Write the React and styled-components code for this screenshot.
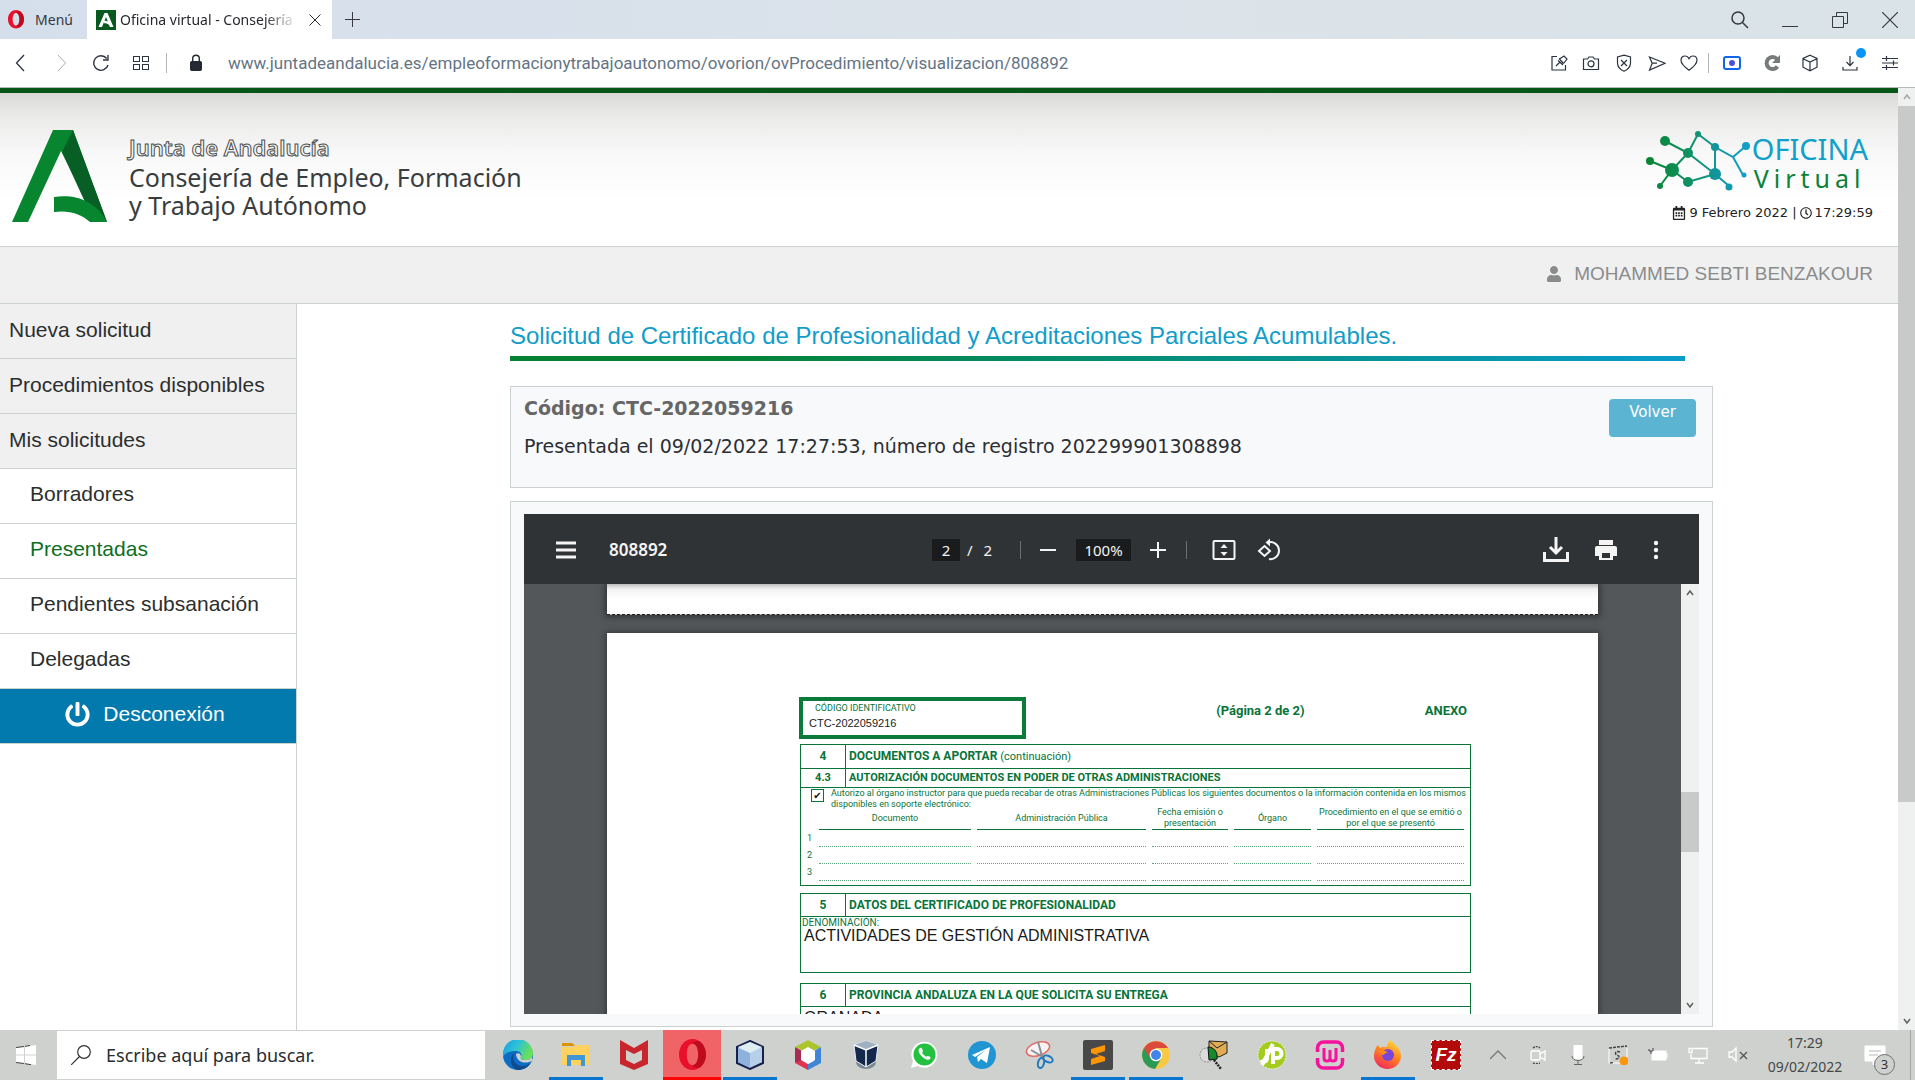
import React from "react";
import styled, { createGlobalStyle, css } from "styled-components";
import { FaPowerOff, FaRegCalendarAlt, FaRegClock, FaUser } from "react-icons/fa";

const ARIAL = '"Liberation Sans", Arial, sans-serif';
const VERDANA = '"DejaVu Sans", Verdana, sans-serif';
const UI = '"Noto Sans", "Segoe UI", sans-serif';
const FORM = 'Roboto, Arial, sans-serif';
const GREEN = "#08743a";
const LINE = "#ccd2cd";

const GlobalStyle = createGlobalStyle`
  *, *::before, *::after { box-sizing: border-box; }
  body { margin: 0; background: #fff; font-family: ${ARIAL}; }
  button, input { font: inherit; color: inherit; }
  button { padding: 0; border: 0; background: none; display: inline-flex; align-items: center; justify-content: center; }
  a { color: inherit; text-decoration: none; }
  h1, h2, p, ul { margin: 0; padding: 0; }
  ul { list-style: none; }
  svg { display: block; flex: none; }
`;

const Desktop = styled.div`
  display: flex;
  flex-direction: column;
  height: 100vh;
  overflow: hidden;
`;

/* ---------- drawing helper ---------- */
const Icon = ({ size = 18, w = 1, fill = "none", box = 18, children }) => (
  <svg width={size} height={size} viewBox={`0 0 ${box} ${box}`} fill={fill} stroke="currentColor" strokeWidth={w} aria-hidden="true">
    {children}
  </svg>
);

/* ---------- browser chrome ---------- */
const TabStrip = styled.div`
  display: flex;
  height: 39px;
  background: linear-gradient(90deg, #d5dfec, #dce3ea 60%, #d9e3e8);
  color: #36393d;
  font: 14px/20px ${UI};
`;
const MenuButton = styled.button`
  width: 87px;
  gap: 11px;
  padding-right: 6px;
`;
const Tab = styled.div`
  display: flex;
  align-items: center;
  width: 245px;
  padding: 0 7px 0 9px;
  gap: 4px;
  background: #fff;
  color: #26282c;
`;
const TabTitle = styled.span`
  flex: 1;
  overflow: hidden;
  white-space: nowrap;
  mask-image: linear-gradient(90deg, #000 80%, transparent 98%);
`;
const TabButton = styled.button`
  width: ${(p) => p.$w || 20}px;
`;
const WindowControls = styled.div`
  display: flex;
  margin-left: auto;
`;
const AddressBar = styled.div`
  display: flex;
  align-items: center;
  height: 49px;
  padding-right: 6px;
  border-bottom: 1px solid #b5bcb6;
  color: #2b3440;
`;
const ToolButton = styled.button`
  position: relative;
  width: ${(p) => p.$w}px;
  height: 32px;
  color: ${(p) => p.$color || "inherit"};
`;
const Divider = styled.span`
  width: 1px;
  height: 20px;
  margin: 0 ${(p) => p.$gap || 0}px;
  background: #b3b8bb;
`;
const UrlInput = styled.input`
  flex: 1;
  min-width: 0;
  margin-left: 8px;
  padding: 0;
  border: 0;
  outline: 0;
  background: transparent;
  font: 17px/24px Roboto, sans-serif;
  color: #647484;
`;
const Dot = styled.span`
  position: absolute;
  top: 1px;
  right: 4px;
  width: 10px;
  height: 10px;
  border-radius: 50%;
  background: #0795f8;
`;

const OperaMark = ({ size = 16 }) => (
  <svg width={size} height={size * 1.15} viewBox="0 0 20 23" aria-hidden="true">
    <path fillRule="evenodd" fill="#e8102a" d="M10 0C4.400 0 0 5 0 11.500S4.400 23 10 23s10-5 10-11.500S15.600 0 10 0Zm0 3.600c2.700 0 4.200 3.400 4.200 7.900s-1.500 7.900-4.200 7.900-4.200-3.400-4.200-7.900 1.500-7.900 4.200-7.900Z" />
    <path fill="#a80a18" d="M10 19.400c2.700 0 4.200-3.400 4.200-7.900S12.700 3.600 10 3.600c1.500-2 4-2.600 5.600-1.600C18.300 4 20 7.500 20 11.500S18.300 19 15.600 21c-1.600 1-4.100.4-5.600-1.600Z" opacity=".65" />
  </svg>
);
const Favicon = () => (
  <svg width="20" height="20" viewBox="0 0 20 20" aria-hidden="true">
    <rect width="20" height="20" fill="#07591f" />
    <path d="M2.500 17 8.500 3h3L17.500 17H14l-1-2c-1.500-1.700-3-2-5-1.800v-2.400c1.500-.2 2.700 0 3.800.7L10 7 6 17Z" fill="#fff" />
  </svg>
);

function Browser() {
  return (
    <>
      <TabStrip>
        <MenuButton type="button"><OperaMark />Menú</MenuButton>
        <Tab>
          <Favicon />
          <TabTitle>Oficina virtual - Consejería d</TabTitle>
          <TabButton type="button" aria-label="Cerrar pestaña"><Icon size={12} box={12}><path d="M.5.5l11 11m0-11l-11 11" /></Icon></TabButton>
        </Tab>
        <TabButton $w={40} type="button" aria-label="Nueva pestaña"><Icon size={15} box={15}><path d="M0 7.500h15M7.500 0v15" /></Icon></TabButton>
        <WindowControls>
          <TabButton $w={50} type="button" aria-label="Buscar"><Icon w={1.500}><circle cx="7" cy="7" r="6" /><path d="M11.500 11.500 17 17" /></Icon></TabButton>
          <TabButton $w={50} type="button" aria-label="Minimizar"><Icon size={16} box={16} w={1}><path d="M0 14.500h16" /></Icon></TabButton>
          <TabButton $w={50} type="button" aria-label="Restaurar"><Icon size={16} box={16}><path d="M.5 4.500h11v11H.5zM4.500 4.500v-4h11v11h-4" /></Icon></TabButton>
          <TabButton $w={50} type="button" aria-label="Cerrar"><Icon size={16} box={16} w={1.200}><path d="M0 0l16 16m0-16L0 16" /></Icon></TabButton>
        </WindowControls>
      </TabStrip>
      <AddressBar>
        <ToolButton $w={41} type="button" aria-label="Atrás"><Icon w={1.300}><path d="M12 1 4.500 9l7.500 8" /></Icon></ToolButton>
        <ToolButton $w={39} $color="#a9b0ae" type="button" aria-label="Adelante"><Icon><path d="M6 1l7.500 8L6 17" /></Icon></ToolButton>
        <ToolButton $w={41} type="button" aria-label="Recargar"><Icon w={1.400}><path d="M16 11a7.300 7.300 0 1 1-1.300-6.500M16 1v5h-5" /></Icon></ToolButton>
        <ToolButton $w={40} type="button" aria-label="Inicio rápido"><Icon><rect x="1.500" y="2.500" width="6" height="5" /><rect x="10.500" y="2.500" width="6" height="5" /><rect x="1.500" y="10.500" width="6" height="5" /><rect x="10.500" y="10.500" width="6" height="5" /></Icon></ToolButton>
        <Divider $gap={5} />
        <ToolButton $w={48} $color="#242a34" type="button" aria-label="Información del sitio"><Icon w={1.400}><rect x="3.700" y="7.700" width="10.600" height="8.600" rx="1" fill="currentColor" /><path d="M5.700 8V4.500a3.300 3.300 0 0 1 6.600 0V8" /></Icon></ToolButton>
        <UrlInput aria-label="Dirección" defaultValue="www.juntadeandalucia.es/empleoformacionytrabajoautonomo/ovorion/ovProcedimiento/visualizacion/808892" />
        <ToolButton $w={33} type="button" aria-label="Fijar"><Icon w={1.200}><path d="M7 2.500H2v13.500h13.500V11M6 12l4-4M9 4.500l4.500 5M9.500 5l4.500-3 3 3-3.500 4.500M8 6.500 13 11" /></Icon></ToolButton>
        <ToolButton $w={32} type="button" aria-label="Captura"><Icon w={1.200}><path d="M1.500 5h4l1.500-2h4l1.500 2h4v10.500h-15z" /><circle cx="9" cy="9.800" r="3" /></Icon></ToolButton>
        <ToolButton $w={33} type="button" aria-label="Bloqueador"><Icon w={1.200}><path d="M9 1.200 15.500 3v6c0 4-2.500 6.500-6.500 8.200C5 15.500 2.500 13 2.500 9V3ZM6 6l6 6m0-6-6 6" /></Icon></ToolButton>
        <ToolButton $w={33} type="button" aria-label="Enviar"><Icon w={1.200}><path d="M1.500 3 17 9.200 1.500 16l2.700-6.800ZM4.200 9.200H9" /></Icon></ToolButton>
        <ToolButton $w={32} type="button" aria-label="Favoritos"><Icon w={1.200}><path d="M9 16.200C4 12.500 1 9.800 1 6.200 1 3.500 2.900 2 5 2c1.800 0 3.200 1 4 2.700C9.800 3 11.200 2 13 2c2.100 0 4 1.500 4 4.200 0 3.600-3 6.300-8 10Z" /></Icon></ToolButton>
        <Divider $gap={3} />
        <ToolButton $w={40} $color="#1264e8" type="button" aria-label="Vídeo"><Icon w={2}><rect x="1" y="3" width="16" height="12" rx="2" /><circle cx="9" cy="9" r="2" fill="currentColor" stroke="#5850d0" /></Icon></ToolButton>
        <ToolButton $w={39} $color="#777b7b" type="button" aria-label="Extensión"><Icon w={4}><path d="M14.500 12.500a6 6 0 1 1-.5-7.500" /><path d="M17 1v8H9Z" fill="currentColor" stroke="none" /></Icon></ToolButton>
        <ToolButton $w={38} type="button" aria-label="Extensiones"><Icon w={1.200}><path d="M9 1.200 16 4.500v8.700L9 16.800 2 13.200V4.500ZM2 4.700 9 8l7-3.300M9 8v8.600" /></Icon></ToolButton>
        <ToolButton $w={41} type="button" aria-label="Descargas"><Icon w={1.200}><path d="M9 2v9.500M5.500 8 9 11.700 12.500 8M2 13v3h14v-3" /></Icon><Dot /></ToolButton>
        <ToolButton $w={39} type="button" aria-label="Configuración"><Icon w={1.200}><path d="M1 4.500h16M1 9h16M1 13.500h16M5.500 2v5M12.500 6.500v5M5.500 11v5" /></Icon></ToolButton>
      </AddressBar>
    </>
  );
}

/* ---------- scrollbars ---------- */
const Track = styled.div`
  display: flex;
  flex-direction: column;
  flex: none;
  width: ${(p) => p.$w}px;
  background: #eff1f0;
  color: #5c6060;
`;
const Arrow = styled.button`
  height: 18px;
  opacity: ${(p) => (p.$dim ? 0.5 : 1)};
`;
const Gutter = styled.span`
  flex: ${(p) => p.$grow};
`;
const Thumb = styled(Gutter)`
  background: #c8caca;
`;
function Scrollbar({ w, before, thumb, after }) {
  return (
    <Track $w={w}>
      <Arrow type="button" aria-label="Subir" $dim={before === 0}><Icon size={8} box={8} w={1.500}><path d="M1 6l3-4 3 4" /></Icon></Arrow>
      {before > 0 && <Gutter $grow={before} />}
      <Thumb $grow={thumb} />
      <Gutter $grow={after} />
      <Arrow type="button" aria-label="Bajar"><Icon size={8} box={8} w={1.500}><path d="M1 2l3 4 3-4" /></Icon></Arrow>
    </Track>
  );
}

/* ---------- site ---------- */
const Viewport = styled.div`
  display: flex;
  flex: 1;
  min-height: 0;
`;
const Site = styled.div`
  display: flex;
  flex-direction: column;
  flex: 1;
  min-width: 0;
`;
const Masthead = styled.header`
  display: flex;
  justify-content: space-between;
  height: 159px;
  padding: 37px 25px 0 12px;
  border-top: 5px solid #06561a;
  border-bottom: 1px solid ${LINE};
  background: linear-gradient(#d9d9d8 0, #ebebea 24px, #f8f8f8 60px, #fff 108px);
`;
const Brand = styled.a`
  display: flex;
  gap: 21px;
  font-family: ${UI};
  color: #3a3d3d;
`;
const BrandText = styled.span`
  display: flex;
  flex-direction: column;
  padding-top: 3px;
  font-size: 25px;
  line-height: 28px;
`;
const BrandTop = styled.span`
  padding-bottom: 2px;
  font-size: 22px;
  font-weight: 600;
  color: #f6f6f6;
  -webkit-text-stroke: 1px #4d5050;
`;
const Office = styled.div`
  display: flex;
  flex-direction: column;
  align-items: flex-end;
`;
const OfficeLogo = styled.a`
  display: flex;
  gap: 2px;
  margin-right: 5px;
  font-family: ${UI};
`;
const OfficeName = styled.span`
  display: flex;
  flex-direction: column;
  padding-top: 4px;
  font-size: 29px;
  line-height: 30px;
  color: #12a0cb;
`;
const OfficeSub = styled.span`
  margin-left: 2px;
  font-size: 25px;
  line-height: 28px;
  letter-spacing: 5px;
  color: #0a8238;
`;
const DateLine = styled.div`
  display: flex;
  align-items: center;
  gap: 3px;
  margin-top: 11px;
  font: 13px/20px ${VERDANA};
  color: #222;
`;
const UserBar = styled.div`
  display: flex;
  align-items: center;
  justify-content: flex-end;
  gap: 12px;
  height: 57px;
  padding: 0 25px 2px 0;
  border-bottom: 1px solid ${LINE};
  background: #f0f0f1;
  color: #8a8c8c;
  font-size: 19px;
`;
const Columns = styled.div`
  display: flex;
  flex: 1;
  min-height: 0;
`;
const Sidebar = styled.nav`
  width: 297px;
  flex: none;
  border-right: 1px solid ${LINE};
  font-size: 21px;
  color: #2c2e2e;
`;
const NavLink = styled.a`
  display: flex;
  align-items: center;
  height: 55px;
  padding: 0 0 2px 9px;
  border-bottom: 1px solid ${LINE};
  background: #f0f0f0;
  ${(p) => p.$sub && css`
    padding: 0 0 4px 30px;
    background: #fff;
  `}
  ${(p) => p.$active && css`
    color: #0d6e22;
  `}
`;
const LogoutLink = styled(NavLink)`
  justify-content: center;
  gap: 13px;
  padding: 0 6px 4px 0;
  background: #037aae;
  color: #fff;
`;
const Main = styled.main`
  display: flex;
  flex-direction: column;
  flex: 1;
  min-width: 0;
  padding: 17px 185px 3px 213px;
`;
const Title = styled.h1`
  margin-right: 28px;
  padding-bottom: 5px;
  border-bottom: 5px solid;
  border-image: linear-gradient(90deg, #04822f 15%, #089ccb) 1;
  font-size: 24px;
  font-weight: 400;
  line-height: 30px;
  color: #119cca;
`;
const Panel = styled.section`
  border: 1px solid ${LINE};
  background: #f7f9fb;
`;
const Summary = styled(Panel)`
  display: flex;
  justify-content: space-between;
  align-items: flex-start;
  height: 102px;
  margin-top: 25px;
  padding: 9px 16px 0 13px;
  font: 19px/24px ${VERDANA};
  color: #2d2f33;
`;
const Code = styled.h2`
  margin-bottom: 14px;
  font: inherit;
  font-weight: 700;
  color: #666666;
`;
const BackButton = styled.button`
  align-items: flex-start;
  width: 87px;
  height: 38px;
  margin-top: 3px;
  padding-top: 3px;
  border-radius: 4px;
  background: #5bb4d2;
  font-size: 15px;
  line-height: 20px;
  color: #fff;
`;
const ViewerPanel = styled(Panel)`
  display: flex;
  flex: 1;
  min-height: 0;
  margin-top: 13px;
  padding: 12px 13px;
`;

/* ---------- pdf viewer ---------- */
const Viewer = styled.div`
  display: flex;
  flex-direction: column;
  flex: 1;
  min-width: 0;
  background: #54575a;
`;
const Toolbar = styled.div`
  display: grid;
  grid-template-columns: 1fr auto 1fr;
  align-items: center;
  flex: none;
  height: 70px;
  padding: 2px 18px 0 30px;
  background: #303336;
  color: #f4f4f4;
  font: 15px/20px ${UI};
`;
const ToolGroup = styled.div`
  display: flex;
  align-items: center;
  gap: ${(p) => p.$gap || 0}px;
  justify-content: ${(p) => (p.$end ? "flex-end" : "flex-start")};
`;
const PageTools = styled(ToolGroup)`
  padding-right: 22px;
`;
const FileName = styled.span`
  font-size: 17px;
  font-weight: 600;
`;
const ToolField = styled.input`
  width: ${(p) => p.$w}px;
  height: 22px;
  padding: 0;
  border: 0;
  background: #191b1c;
  text-align: center;
`;
const PdfButton = styled.button`
  width: ${(p) => p.$w}px;
  height: 40px;
`;
const PdfDivider = styled.span`
  width: 1px;
  height: 18px;
  margin: 0 ${(p) => p.$right}px 0 ${(p) => p.$left}px;
  background: #6c7073;
`;
const PdfBody = styled.div`
  display: flex;
  flex: 1;
  min-height: 0;
`;
const Pages = styled.div`
  display: flex;
  flex-direction: column;
  gap: 18px;
  flex: 1;
  padding: 0 83px;
  overflow: hidden;
`;
const PageTail = styled.div`
  flex: none;
  height: 31px;
  border-bottom: 1px dashed #222;
  background: linear-gradient(#bdbdbd, #f2f2f2 5px, #fff 14px);
  box-shadow: 0 0 6px 2px rgba(20, 20, 20, 0.55);
`;
const Page = styled.article`
  flex: none;
  min-height: 600px;
  padding: 64px 127px 0 192px;
  background: #fff;
  box-shadow: 0 0 6px 1px rgba(20, 20, 20, 0.5);
  font: 9px/11px ${FORM};
  color: ${GREEN};
`;
const FormHead = styled.div`
  display: flex;
  align-items: flex-start;
  justify-content: space-between;
  padding-right: 4px;
  font-size: 13px;
  font-weight: 700;
  line-height: 27px;
`;
const IdBox = styled.div`
  width: 227px;
  height: 42px;
  padding: 1px 12px 0;
  border: 4px solid #0a7b3b;
  font-size: 9px;
  font-weight: 400;
  line-height: 12px;
`;
const IdValue = styled.div`
  margin: 2px 0 0 -6px;
  font: 11px/14px ${ARIAL};
  color: #222;
`;
const PageCount = styled.span`
  margin-left: 70px;
`;
const Section = styled.section`
  height: ${(p) => p.$h}px;
  margin: ${(p) => p.$top}px 0 0 1px;
  border: 1px solid ${GREEN};
`;
const SectionHead = styled.div`
  display: grid;
  grid-template-columns: 45px 1fr;
  border-bottom: 1px solid ${GREEN};
  font-size: ${(p) => (p.$minor ? 11 : 12)}px;
  line-height: ${(p) => (p.$minor ? 18 : 22)}px;
  font-weight: 700;
`;
const SectionNo = styled.span`
  border-right: 1px solid ${GREEN};
  text-align: center;
`;
const SectionTitle = styled.span`
  padding-left: 3px;
`;
const Soft = styled.span`
  font-size: 11px;
  font-weight: 400;
`;
const Consent = styled.label`
  display: grid;
  grid-template-columns: 13px 1fr;
  gap: 7px;
  height: 19px;
  padding: 0 4px 0 10px;
  text-align: justify;
`;
const Check = styled.input`
  appearance: none;
  width: 13px;
  height: 13px;
  margin: 1px 0 0;
  border: 1px solid ${GREEN};
  &:checked::after {
    content: "✔";
    display: block;
    font: 10px/11px "DejaVu Sans", sans-serif;
    color: #111;
    text-align: center;
  }
`;
const Grid = styled.table`
  width: 100%;
  table-layout: fixed;
  border-collapse: separate;
  border-spacing: 6px 0;
  th {
    height: 23px;
    padding: 0;
    border-bottom: 1px solid ${GREEN};
    font-weight: 400;
    line-height: 11px;
  }
  td {
    height: 17px;
    padding: 0;
    border-bottom: 1px dotted #5fa67f;
  }
  th:first-child,
  td:first-child {
    border-bottom: 0;
  }
`;
const Answer = styled.p`
  padding: ${(p) => p.$top || 0}px 0 0 3px;
  font: 16px/15px ${ARIAL};
  color: #1a1a1a;
`;
const FieldLabel = styled.p`
  padding-left: 1px;
  font-size: 10px;
`;

function PdfForm() {
  return (
    <Page>
      <FormHead>
        <IdBox>CÓDIGO IDENTIFICATIVO<IdValue>CTC-2022059216</IdValue></IdBox>
        <PageCount>(Página 2 de 2)</PageCount>
        <span>ANEXO</span>
      </FormHead>
      <Section $h={142} $top={5}>
        <SectionHead><SectionNo>4</SectionNo><SectionTitle>DOCUMENTOS A APORTAR <Soft>(continuación)</Soft></SectionTitle></SectionHead>
        <SectionHead $minor><SectionNo>4.3</SectionNo><SectionTitle>AUTORIZACIÓN DOCUMENTOS EN PODER DE OTRAS ADMINISTRACIONES</SectionTitle></SectionHead>
        <Consent>
          <Check type="checkbox" defaultChecked />
          <span>Autorizo al órgano instructor para que pueda recabar de otras Administraciones Públicas los siguientes documentos o la información contenida en los mismos disponibles en soporte electrónico:</span>
        </Consent>
        <Grid>
          <colgroup><col width="6" /><col width="152" /><col width="169" /><col width="76" /><col width="77" /><col /></colgroup>
          <thead>
            <tr><th /><th>Documento</th><th>Administración Pública</th><th>Fecha emisión o presentación</th><th>Órgano</th><th>Procedimiento en el que se emitió o<br />por el que se presentó</th></tr>
          </thead>
          <tbody>
            {[1, 2, 3].map((n) => (
              <tr key={n}><td>{n}</td><td /><td /><td /><td /><td /></tr>
            ))}
          </tbody>
        </Grid>
      </Section>
      <Section $h={80} $top={7}>
        <SectionHead><SectionNo>5</SectionNo><SectionTitle>DATOS DEL CERTIFICADO DE PROFESIONALIDAD</SectionTitle></SectionHead>
        <FieldLabel>DENOMINACIÓN:</FieldLabel>
        <Answer>ACTIVIDADES DE GESTIÓN ADMINISTRATIVA</Answer>
      </Section>
      <Section $h={80} $top={10}>
        <SectionHead><SectionNo>6</SectionNo><SectionTitle>PROVINCIA ANDALUZA EN LA QUE SOLICITA SU ENTREGA</SectionTitle></SectionHead>
        <Answer $top={3}>GRANADA</Answer>
      </Section>
    </Page>
  );
}

function PdfViewer() {
  return (
    <Viewer>
      <Toolbar>
        <ToolGroup $gap={31}>
          <PdfButton $w={24} type="button" aria-label="Menú del documento"><Icon size={20} box={20} w={3}><path d="M0 3h20M0 10h20M0 17h20" /></Icon></PdfButton>
          <FileName>808892</FileName>
        </ToolGroup>
        <PageTools>
          <ToolGroup $gap={7}>
            <ToolField $w={28} aria-label="Página" defaultValue="2" />
            <span>/</span>
            <span>&nbsp;2</span>
          </ToolGroup>
          <PdfDivider $left={28} $right={18} />
          <ToolGroup $gap={19}>
            <PdfButton $w={18} type="button" aria-label="Alejar"><Icon size={16} box={16} w={2}><path d="M0 8h16" /></Icon></PdfButton>
            <ToolField $w={55} aria-label="Zoom" defaultValue="100%" />
            <PdfButton $w={16} type="button" aria-label="Acercar"><Icon size={16} box={16} w={2}><path d="M0 8h16M8 0v16" /></Icon></PdfButton>
          </ToolGroup>
          <PdfDivider $left={20} $right={25} />
          <ToolGroup $gap={21}>
            <PdfButton $w={24} type="button" aria-label="Ajustar a la página"><Icon size={24} box={24} w={2}><rect x="1.500" y="3" width="21" height="18" rx="1" /><path d="M12 6l3.500 4h-7ZM12 18l3.500-4h-7Z" fill="currentColor" stroke="none" /></Icon></PdfButton>
            <PdfButton $w={24} type="button" aria-label="Girar"><Icon size={24} box={24} w={2}><path d="M7.500 8l5.500 5-5.500 5L2 13Z" /><path d="M11 4.500a8.500 8.500 0 1 1 1 16.500" /><path d="M13 .5v8L8.500 4.500Z" fill="currentColor" stroke="none" /></Icon></PdfButton>
          </ToolGroup>
        </PageTools>
        <ToolGroup $end>
          <PdfButton $w={50} type="button" aria-label="Descargar"><Icon size={26} box={26} w={3}><path d="M13 0v15M7 10l6 6 6-6M1.500 15v8.500h23V15" /></Icon></PdfButton>
          <PdfButton $w={50} type="button" aria-label="Imprimir"><Icon size={24} box={24}><path d="M5 2h14v5H5zM3 8h18c1.100 0 2 .9 2 2v8h-4v4H5v-4H1v-8c0-1.100.9-2 2-2Zm5 7v5h8v-5Z" fill="currentColor" fillRule="evenodd" stroke="none" /></Icon></PdfButton>
          <PdfButton $w={50} type="button" aria-label="Más"><Icon size={20} box={20}><g fill="currentColor" stroke="none"><circle cx="10" cy="3" r="2.200" /><circle cx="10" cy="10" r="2.200" /><circle cx="10" cy="17" r="2.200" /></g></Icon></PdfButton>
        </ToolGroup>
      </Toolbar>
      <PdfBody>
        <Pages><PageTail /><PdfForm /></Pages>
        <Scrollbar w={18} before={190} thumb={60} after={144} />
      </PdfBody>
    </Viewer>
  );
}

const JuntaMark = () => (
  <svg width="96" height="92" viewBox="0 0 96 92" aria-hidden="true">
    <path d="M41 0h20L95 92 78 78 49 21 16 92H0Z" fill="#07852f" />
    <path d="M61 0 95 92 73 72 50 22Z" fill="#075f26" />
    <path d="M42 67c22-3 42 4 53 25H78C69 84 57 80 42 82Z" fill="#07852f" />
  </svg>
);
const NetworkMark = () => (
  <svg width="104" height="62" viewBox="0 0 104 62" aria-hidden="true">
    <defs>
      <linearGradient id="net" gradientUnits="userSpaceOnUse" x1="0" y1="0" x2="104" y2="0">
        <stop offset="0" stopColor="#07852f" /><stop offset=".4" stopColor="#109060" /><stop offset=".7" stopColor="#1296a0" /><stop offset="1" stopColor="#12a0cb" />
      </linearGradient>
    </defs>
    <g stroke="url(#net)" strokeWidth="2" fill="none"><path d="M4 31l22 9 16-17-23-12M42 23 52 4l17 13 18 10 13-11M87 27l10 18M69 17v27L83 56M42 23l27 21-27 8-16-12L14 56" /></g>
    <g fill="url(#net)"><circle cx="4" cy="31" r="4" /><circle cx="19" cy="11" r="5" /><circle cx="26" cy="40" r="7" /><circle cx="14" cy="56" r="3" /><circle cx="42" cy="23" r="5" /><circle cx="52" cy="4" r="3" /><circle cx="69" cy="17" r="4" /><circle cx="69" cy="44" r="6" /><circle cx="42" cy="52" r="5" /><circle cx="83" cy="57" r="3.500" /><circle cx="100" cy="16" r="4" /><circle cx="98" cy="45" r="2.500" /></g>
  </svg>
);

/* ---------- taskbar ---------- */
const Bar = styled.footer`
  display: flex;
  height: 50px;
  flex: none;
  background: #cfd1cf;
  font: 14px/24px ${UI};
  color: #333;
`;
const StartButton = styled.button`
  flex: none;
  width: 57px;
  padding-right: 5px;
  color: #fff;
`;
const SearchBox = styled.label`
  display: flex;
  align-items: center;
  gap: 15px;
  flex: none;
  width: 428px;
  margin: 1px 4px 1px 0;
  padding-left: 14px;
  background: #fff;
`;
const SearchInput = styled.input`
  flex: 1;
  min-width: 0;
  padding: 0;
  border: 0;
  outline: 0;
  background: transparent;
  font-size: 18px;
  &::placeholder { color: #2a2c2e; opacity: 1; }
`;
const AppButton = styled.button`
  flex: none;
  width: 58px;
  border-bottom: 3px solid transparent;
  border-top: 3px solid transparent;
  ${(p) => p.$running && css`
    border-image: linear-gradient(90deg, transparent 5px, #0876d0 5px, #0876d0 53px, transparent 53px) 3;
    border-top-width: 0;
    padding-top: 3px;
  `}
  ${(p) => p.$current && css`
    background: #f06468;
    border-color: #f06468 transparent #fb0505;
  `}
`;
const Tray = styled.div`
  display: flex;
  align-items: center;
  margin-left: auto;
  color: #fff;
`;
const TrayButton = styled.button`
  width: 40px;
  height: 50px;
  color: ${(p) => p.$color || "inherit"};
`;
const Clock = styled.div`
  width: 94px;
  text-align: center;
  color: #444746;
`;
const Notices = styled.button`
  position: relative;
  width: 59px;
  height: 50px;
  margin-right: 4px;
  padding-right: 13px;
  border-right: 1px solid #a3a6a4;
`;
const NoticeCount = styled.span`
  position: absolute;
  right: 15px;
  bottom: 5px;
  width: 21px;
  height: 21px;
  border: 1px solid #6d706f;
  border-radius: 50%;
  background: #cfd1cf;
  color: #333;
  font-size: 13px;
  line-height: 19px;
`;

const Svg = ({ children }) => <svg width="30" height="30" viewBox="0 0 30 30" aria-hidden="true">{children}</svg>;
const Logo = styled.span`
  display: grid;
  place-items: center;
  width: 30px;
  height: 30px;
  background: #b30b0b;
  outline: 1px dashed #fff;
  outline-offset: -1px;
  color: #fff;
  font: italic 700 19px/30px ${ARIAL};
`;

const APPS = [
  { name: "Edge", art: <Svg><defs><linearGradient id="eg" x1="0" y1="0" x2="1" y2=".4"><stop offset="0" stopColor="#1a9be0" /><stop offset=".5" stopColor="#2cc1d8" /><stop offset="1" stopColor="#6be05a" /></linearGradient></defs><circle cx="15" cy="15" r="15" fill="#0d6cc4" /><path d="M0 15A15 15 0 0 1 30 13c0 5-3 7-8 7-4 0-5-1.500-4-3.500 1-2-.5-5.500-5-5.500C7 11 1 13 0 17Z" fill="url(#eg)" /><path d="M12 13c-4 5-1 13 8 13 3 0 5-1 8-3-3 4.500-8 7-13 7C8 29 5 16 12 13Z" fill="#114a8c" /><path d="M13 14c2-2 5 0 5 2.500-1 2 0 3.500 4 3.500 3 0 5-.8 7-2.500v3C25 24 14 24 13 14Z" fill="#cfd1cf" /></Svg> },
  { name: "Explorador", running: true, art: <Svg><path d="M1 3h10l3 3H1Z" fill="#d99400" /><path d="M1 7h12l2-2h13v20H1Z" fill="#ffd25f" /><path d="M6 26V15h18v11h-4v-6H10v6Z" fill="#3f97d8" /></Svg> },
  { name: "McAfee", art: <Svg><path d="M1 0 15 8 29 0v24L15 30 1 24Zm6 10v10l8 4 8-4V10l-8 4Z" fill="#c9252d" fillRule="evenodd" /></Svg> },
  { name: "Opera", current: true, art: <OperaMark size={27} /> },
  { name: "NetBeans", running: true, art: <Svg><path d="M15 1 28 7v16l-13 6L2 23V7Z" fill="#b7cfe8" stroke="#16204d" strokeWidth="2" /><path d="M3 8l12 5v15L3 22Z" fill="#8fb2dc" /><path d="M15 2l12 5-12 6L3 7Z" fill="#dfeef2" /></Svg> },
  { name: "NetBeans IDE", art: <Svg><path d="M15 0 28 7 15 13 2 7Z" fill="#adc52c" /><path d="M2 7l7 4v10l-7 2Z" fill="#a72c55" /><path d="M2 23 9 20l6 4v6Z" fill="#e0334f" /><path d="M28 7l-7 4v10l-6 3v6l13-7Z" fill="#3f86d6" /><path d="M15 7l7 4v9l-7 4-7-4v-9Z" fill="#fff" /></Svg> },
  { name: "VirtualBox", art: <Svg><ellipse cx="15" cy="22" rx="10" ry="7" fill="#7b8794" /><path d="M15 1 27 5l-2 16-10 6L5 21 3 5Z" fill="#12294d" stroke="#e8edf2" strokeWidth="1" /><path d="M3 5l12-4 12 4-12 5Z" fill="#9fb0c2" /><path d="M3 5l12 5 12-5M15 10v17" stroke="#fff" strokeWidth="1.500" fill="none" /></Svg> },
  { name: "WhatsApp", art: <Svg><path d="M2 28l2-7A13 13 0 1 1 9 26Z" fill="#fff" /><circle cx="15.500" cy="14.500" r="11" fill="#23c13f" /><path d="M11 8c-2 1-2 4 1 7.500s7 5.500 9 3.500c1-1 .5-1.800-.5-2.400-1.500-1-2.300-.9-3 .2-2-.8-3.600-2.300-4.400-4.300 1.300-.9 1-1.500.3-3C12.800 8 12 7.500 11 8Z" fill="#fff" /></Svg> },
  { name: "Telegram", art: <Svg><circle cx="15" cy="15" r="14" fill="#2095d2" /><path d="M5 15 23 7l-3 16-6-4-3 3-1-5 9-7-11 7Z" fill="#fff" /></Svg> },
  { name: "Recortes", art: <Svg><g fill="none"><ellipse cx="13" cy="9" rx="12" ry="6.500" fill="#f4f4f4" stroke="#e36a64" strokeWidth="1.500" transform="rotate(-18 13 9)" /><path d="M13 2l4 14M6 10l12 7" stroke="#8b8f92" strokeWidth="2" /><ellipse cx="16" cy="23" rx="3" ry="5" stroke="#2079bd" strokeWidth="2" transform="rotate(15 16 23)" /><ellipse cx="23" cy="19" rx="5" ry="3" stroke="#2079bd" strokeWidth="2" transform="rotate(25 23 19)" /></g></Svg> },
  { name: "Sublime Text", running: true, art: <Svg><rect width="30" height="30" rx="2" fill="#484848" /><path d="M22 5v6l-9 3 9 3v4L8 25v-6l9-3-9-3V9Z" fill="#ff9500" /></Svg> },
  { name: "Chrome", running: true, art: <Svg><circle cx="15" cy="15" r="14" fill="#fbc843" /><path d="M15 15 2.900 8A14 14 0 0 0 14 29l6-10Z" fill="#2b9a57" /><path d="M15 8h12.100A14 14 0 0 0 3 8l6 10Z" fill="#dc4a3d" /><circle cx="15" cy="15" r="6.300" fill="#fff" /><circle cx="15" cy="15" r="5" fill="#4285e8" /></Svg> },
  { name: "Correo", art: <Svg><circle cx="8" cy="15" r="7" fill="#d9dcda" stroke="#8b8f8d" strokeDasharray="2 1" /><path d="M10 1 28 2v11l-8 4-10-4Z" fill="#e0ad55" stroke="#222" /><path d="M10 1l8 7 10-6" fill="none" stroke="#222" /><path d="M9 7c6 0 10 5 9 12l-8 1Z" fill="#158a2b" stroke="#111" /><path d="M15 20l7 9" stroke="#222" strokeWidth="2.500" strokeDasharray="2 1" /></Svg> },
  { name: "JDownloader", art: <Svg><circle cx="15" cy="15" r="14" fill="#a4cc1e" stroke="#eee" strokeDasharray="2 1" /><path d="M5 25 16 4M10 9v9c0 4-4 5-6 2M16 24V9h4c6 0 6 9 0 9h-3" stroke="#fff" strokeWidth="4" fill="none" /></Svg> },
  { name: "WampServer", art: <Svg><g fill="none" stroke="#f5129c"><path d="M2.500 12V8a6 6 0 0 1 6-6h13a6 6 0 0 1 6 6v4M2.500 18v4a6 6 0 0 0 6 6h13a6 6 0 0 0 6-6v-4" strokeWidth="3.500" /><path d="M9 8v10c0 4 6 4 6 0v-8 8c0 4 6 4 6 0V8" strokeWidth="3" /></g></Svg> },
  { name: "Firefox", running: true, art: <Svg><defs><linearGradient id="ff" x1=".8" y1="0" x2=".3" y2="1"><stop offset="0" stopColor="#ffe23a" /><stop offset=".5" stopColor="#ff8020" /><stop offset="1" stopColor="#f32a5c" /></linearGradient></defs><path d="M18 0c2 4 10 7 10 16a13.500 13 0 0 1-27 0C1 11 3 7 5 5l2 3c3-2 6-1 7-1 0-3 2-6 4-7Z" fill="url(#ff)" /><circle cx="15" cy="15" r="6" fill="#7a45d8" /><path d="M5 11c4-2 7 0 10 1-3 1-4 3-6 3Z" fill="#ff8a1c" /></Svg> },
  { name: "FileZilla", art: <Logo>Fz</Logo> },
];

function Taskbar() {
  return (
    <Bar>
      <StartButton type="button" aria-label="Inicio"><Icon size={20} box={20}><g fill="currentColor" stroke="none"><path d="M0 3l8-1v7.500H0zM9 1.800 20 0v9.500H9zM0 10.500h8V18l-8-1zM9 10.500h11V20L9 18.200z" /></g><path d="M0 2.500l8-1M9 1.300 14 .5M0 17.500l8 1M9 18.700l6 1" stroke="#444" /></Icon></StartButton>
      <SearchBox>
        <Icon size={20} box={20} w={1.200}><circle cx="13" cy="7" r="6.300" /><path d="M8.500 11.500 0 20" /></Icon>
        <SearchInput type="text" placeholder="Escribe aquí para buscar." aria-label="Buscar" />
      </SearchBox>
      {APPS.map((a) => (
        <AppButton key={a.name} type="button" aria-label={a.name} $running={a.running} $current={a.current}>{a.art}</AppButton>
      ))}
      <Tray>
        <TrayButton $color="#777a79" type="button" aria-label="Mostrar iconos ocultos"><Icon size={16} box={16} w={1.300}><path d="M0 12l8-8 8 8" /></Icon></TrayButton>
        <TrayButton type="button" aria-label="Cámara"><Icon w={1.300}><rect x="2" y="5" width="9" height="9" rx="1" /><path d="M11 8l5-3v9l-5-3" /><path d="M4 2c2-2 5-2 7 0M4 17c2 1 5 1 7 0" stroke="#444" strokeDasharray="2 1" /></Icon></TrayButton>
        <TrayButton type="button" aria-label="Micrófono"><Icon size={20} box={20}><rect x="6" y="0" width="8" height="14" rx="1" fill="currentColor" /><path d="M4 11c0 6 12 6 12 0M10 16v4M6 19.500h8" stroke="#666" /></Icon></TrayButton>
        <TrayButton type="button" aria-label="Pantalla"><Icon size={20} box={20}><path d="M1 4v14h12M19 3v9" /><path d="M1 3l18-2M12 7c-4-2-6 2-3 3s3 4-2 4M2 18l4-.5" stroke="#444" strokeWidth="1.500" strokeDasharray="3 1" /><circle cx="16" cy="16" r="4.500" fill="#f9970a" stroke="none" /></Icon></TrayButton>
        <TrayButton type="button" aria-label="Batería"><Icon size={20} box={20}><rect x="4" y="6" width="14" height="9" fill="currentColor" /><path d="M19 8v5" /><path d="M1 4v2h4V3M3 6v3" stroke="#444" /></Icon></TrayButton>
        <TrayButton type="button" aria-label="Red"><Icon size={20} box={20} w={1.300}><path d="M5 3.500h14v10H3V9M11 14v4M7 18h9M1 3.500h3v4H1z" /></Icon></TrayButton>
        <TrayButton type="button" aria-label="Volumen"><Icon size={20} box={20} w={1.300}><path d="M1 7h3l4-4v13l-4-4H1z" /><path d="M12 7l7 7m0-7-7 7" stroke="#555" /></Icon></TrayButton>
        <Clock>17:29<br />09/02/2022</Clock>
        <Notices type="button" aria-label="Notificaciones"><Icon size={22} box={22}><path d="M1 2h20v15h-8l-4 4v-4H1z" fill="currentColor" /><path d="M5 7h12M5 11h9" stroke="#b5b7b5" /></Icon><NoticeCount>3</NoticeCount></Notices>
      </Tray>
    </Bar>
  );
}

const NAV = [
  ["Nueva solicitud"], ["Procedimientos disponibles"], ["Mis solicitudes"],
  ["Borradores", true], ["Presentadas", true, true], ["Pendientes subsanación", true], ["Delegadas", true],
];

export default function App() {
  return (
    <Desktop>
      <GlobalStyle />
      <Browser />
      <Viewport>
        <Site>
          <Masthead>
            <Brand href="#inicio">
              <JuntaMark />
              <BrandText><BrandTop>Junta de Andalucía</BrandTop><span>Consejería de Empleo, Formación</span><span>y Trabajo Autónomo</span></BrandText>
            </Brand>
            <Office>
              <OfficeLogo href="#oficina"><NetworkMark /><OfficeName>OFICINA<OfficeSub>Virtual</OfficeSub></OfficeName></OfficeLogo>
              <DateLine><FaRegCalendarAlt size={14} />9 Febrero 2022 | <FaRegClock size={12} />17:29:59</DateLine>
            </Office>
          </Masthead>
          <UserBar><FaUser size={16} />MOHAMMED SEBTI BENZAKOUR</UserBar>
          <Columns>
            <Sidebar>
              <ul>
                {NAV.map(([label, sub, active]) => (
                  <li key={label}><NavLink href="#" $sub={sub} $active={active}>{label}</NavLink></li>
                ))}
                <li><LogoutLink href="#salir"><FaPowerOff size={25} />Desconexión</LogoutLink></li>
              </ul>
            </Sidebar>
            <Main>
              <Title>Solicitud de Certificado de Profesionalidad y Acreditaciones Parciales Acumulables.</Title>
              <Summary>
                <div>
                  <Code>Código: CTC-2022059216</Code>
                  <p>Presentada el 09/02/2022 17:27:53, número de registro 202299901308898</p>
                </div>
                <BackButton type="button">Volver</BackButton>
              </Summary>
              <ViewerPanel><PdfViewer /></ViewerPanel>
            </Main>
          </Columns>
        </Site>
        <Scrollbar w={17} before={0} thumb={696} after={210} />
      </Viewport>
      <Taskbar />
    </Desktop>
  );
}
